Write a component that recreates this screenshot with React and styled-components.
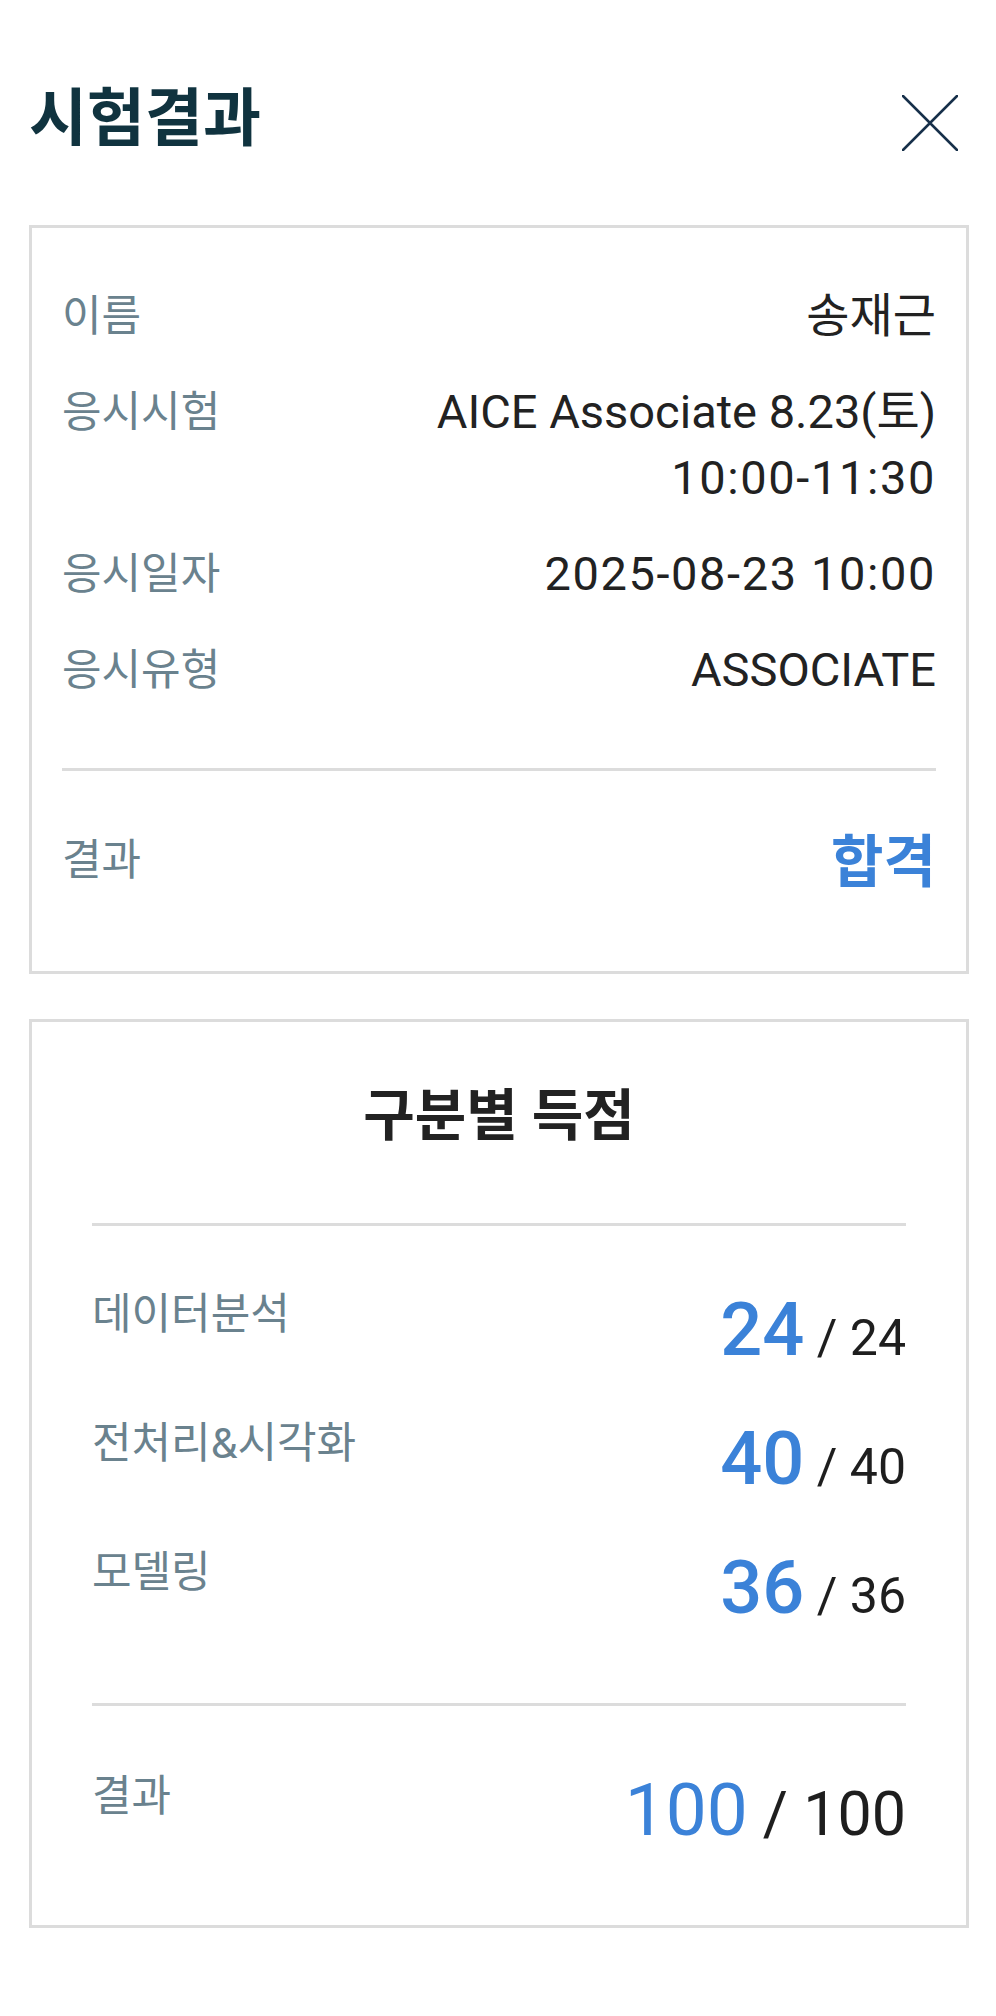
import React from "react";
import styled, { createGlobalStyle } from "styled-components";

const GlobalStyle = createGlobalStyle`
  body {
    margin: 0;
    background: #fff;
    font-family: Roboto, "Noto Sans CJK KR", sans-serif;
  }
`;

const Page = styled.div`
  padding: 87px 27px 60px 29px;
`;

const Header = styled.header`
  display: flex;
  justify-content: space-between;
  align-items: flex-start;
  margin-bottom: 74px;
`;

const Title = styled.h1`
  margin: 0;
  font-size: 63px;
  line-height: 63px;
  font-weight: 700;
  color: #10333f;
`;

const CloseButton = styled.button`
  border: none;
  background: none;
  padding: 0;
  margin: 8px 11px 0 0;
  width: 56px;
  height: 56px;
  cursor: pointer;

  svg {
    display: block;
  }
`;

const Card = styled.section`
  border: 3px solid #dcdcdc;
  background: #fff;

  & + & {
    margin-top: 45px;
  }
`;

const InfoList = styled.div`
  display: flex;
  flex-direction: column;
  gap: 30px;
  padding: 55px 30px 65px;
`;

const Row = styled.div`
  display: flex;
  justify-content: space-between;
  align-items: flex-start;
`;

const Label = styled.div`
  font-size: 43px;
  line-height: 66px;
  color: #6a828e;
  white-space: nowrap;
`;

const Value = styled.div`
  font-size: 47px;
  line-height: 66px;
  color: #222;
  text-align: right;
`;

const ValueLine = styled.div`
  letter-spacing: ${(p) => (p.$numeric ? "1.6px" : "0")};
`;

const Divider = styled.div`
  height: 3px;
  background: #dcdcdc;
  margin: 0 ${(p) => p.$inset}px;
`;

const ResultRow = styled(Row)`
  padding: 56px 30px 75px;
`;

const Pass = styled.div`
  font-size: 57px;
  line-height: 66px;
  font-weight: 700;
  color: #3b82d8;
  margin-top: 3px;
`;

const ScoreTitle = styled.h2`
  margin: 0;
  padding: 61px 0 74px;
  text-align: center;
  font-size: 56px;
  line-height: 66px;
  font-weight: 700;
  color: #222;
`;

const ScoreList = styled.div`
  display: flex;
  flex-direction: column;
  gap: 31px;
  padding: 55px 60px 66px;
`;

const Score = styled.div`
  font-size: ${(p) => p.$size}px;
  line-height: ${(p) => p.$lh}px;
  font-weight: ${(p) => p.$weight};
  color: #3b82d8;
  white-space: nowrap;
`;

const Max = styled.span`
  font-size: ${(p) => p.$size}px;
  line-height: 1;
  font-weight: 400;
  color: #1e1e1e;
`;

const TotalRow = styled(Row)`
  padding: 57px 60px 68px;
`;

const info = [
  ["이름", [["송재근"]]],
  ["응시시험", [["AICE Associate 8.23(토)"], ["10:00-11:30", true]]],
  ["응시일자", [["2025-08-23 10:00", true]]],
  ["응시유형", [["ASSOCIATE"]]],
];

const scores = [
  ["데이터분석", 24, 24],
  ["전처리&시각화", 40, 40],
  ["모델링", 36, 36],
];

export default function App() {
  return (
    <>
      <GlobalStyle />
      <Page>
        <Header>
          <Title>시험결과</Title>
          <CloseButton aria-label="닫기">
            <svg width="56" height="56" viewBox="0 0 56 56">
              <path
                d="M1 1 L55 55 M55 1 L1 55"
                stroke="#17304a"
                strokeWidth="2.5"
                strokeLinecap="round"
                fill="none"
              />
            </svg>
          </CloseButton>
        </Header>

        <Card>
          <InfoList>
            {info.map(([label, lines]) => (
              <Row key={label}>
                <Label>{label}</Label>
                <Value>
                  {lines.map(([text, numeric]) => (
                    <ValueLine key={text} $numeric={numeric}>
                      {text}
                    </ValueLine>
                  ))}
                </Value>
              </Row>
            ))}
          </InfoList>
          <Divider $inset={30} />
          <ResultRow>
            <Label>결과</Label>
            <Pass>합격</Pass>
          </ResultRow>
        </Card>

        <Card>
          <ScoreTitle>구분별 득점</ScoreTitle>
          <Divider $inset={60} />
          <ScoreList>
            {scores.map(([label, got, max]) => (
              <Row key={label}>
                <Label>{label}</Label>
                <Score $size={74} $lh={98} $weight={500}>
                  {got}
                  <Max $size={50}> / {max}</Max>
                </Score>
              </Row>
            ))}
          </ScoreList>
          <Divider $inset={60} />
          <TotalRow>
            <Label>결과</Label>
            <Score $size={73} $lh={94} $weight={400}>
              100
              <Max $size={61}> / 100</Max>
            </Score>
          </TotalRow>
        </Card>
      </Page>
    </>
  );
}
